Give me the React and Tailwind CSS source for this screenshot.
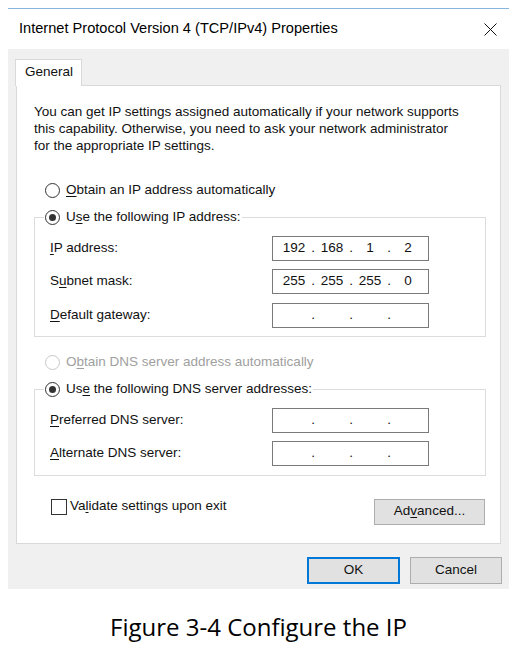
import React from 'react';

const Key = ({ children }) => (
  <span className="underline decoration-1 underline-offset-2">{children}</span>
);

const Radio = ({ checked, disabled }) => (
  <span
    className={`flex h-[15px] w-[15px] shrink-0 items-center justify-center rounded-full border bg-white ${
      disabled ? 'border-[#c8c8c8]' : 'border-[#333333]'
    }`}
  >
    {checked && <span className="h-[7px] w-[7px] rounded-full bg-[#333333]" />}
  </span>
);

const IpField = ({ parts = ['', '', '', ''] }) => (
  <div className="flex h-[25px] w-[157px] items-center border border-[#7a7a7a] bg-white pl-[3px]">
    {parts.map((p, i) => (
      <React.Fragment key={i}>
        <span className="w-[36px] text-center">{p}</span>
        {i < 3 && <span className="flex w-[2px] justify-center">.</span>}
      </React.Fragment>
    ))}
  </div>
);

const Row = ({ label, parts }) => (
  <div className="flex items-center justify-between">
    <span>{label}</span>
    <IpField parts={parts} />
  </div>
);

const Group = ({ legend, className, children }) => (
  <fieldset className={`ml-[17px] w-[452px] border border-[#dcdcdc] ${className}`}>
    <legend className="ml-[9px] px-[1px]">
      <div className="flex h-[20px] items-center gap-[6px]">
        <Radio checked />
        <span>{legend}</span>
      </div>
    </legend>
    <div className="flex flex-col gap-[8.5px] pb-[8.5px] pl-[15px] pr-[56px] pt-[8px]">{children}</div>
  </fieldset>
);

export default function App() {
  return (
    <div className="h-[658px] w-[509px] bg-white pl-[8px] pt-[8px] font-['Liberation_Sans',Arial,sans-serif] text-[13.5px] text-[#111111]">
      <div className="w-[501px]">
        {/* window frame */}
        <div className="border-t border-[#86b6de]" />
        <div className="flex h-[40px] items-center justify-between bg-white pl-[11px] pr-[12px]">
          <span className="text-[14.6px] text-black">Internet Protocol Version 4 (TCP/IPv4) Properties</span>
          <svg width="13" height="13" viewBox="0 0 13 13" className="text-[#111]">
            <path d="M0.5 0.5 L12.5 12.5 M12.5 0.5 L0.5 12.5" stroke="currentColor" strokeWidth="1" fill="none" />
          </svg>
        </div>

        <div className="flex h-[540px] flex-col bg-[#f0f0f0] pt-[10px]">
          {/* tab */}
          <div className="relative z-10 -mb-px ml-[7px] flex h-[27px] w-[67px] items-center border border-b-0 border-[#d9d9d9] bg-white pb-[1px] pl-[9px]">
            General
          </div>

          {/* panel */}
          <div className="ml-[8px] flex h-[459px] w-[485px] flex-col border border-[#d9d9d9] bg-white">
            <p className="ml-[17px] mt-[17px] leading-[17px]">
              You can get IP settings assigned automatically if your network supports
              <br />
              this capability. Otherwise, you need to ask your network administrator
              <br />
              for the appropriate IP settings.
            </p>

            <div className="ml-[28px] mt-[26.5px] flex h-[20px] items-center gap-[6px]">
              <Radio />
              <span>
                <Key>O</Key>btain an IP address automatically
              </span>
            </div>

            <Group
              className="mt-[7px]"
              legend={
                <>
                  U<Key>s</Key>e the following IP address:
                </>
              }
            >
              <Row label={<><Key>I</Key>P address:</>} parts={['192', '168', '1', '2']} />
              <Row label={<>S<Key>u</Key>bnet mask:</>} parts={['255', '255', '255', '0']} />
              <Row label={<><Key>D</Key>efault gateway:</>} />
            </Group>

            <div className="ml-[28px] mt-[15px] flex h-[20px] items-center gap-[6px] text-[#a0a0a0]">
              <Radio disabled />
              <span>
                O<Key>b</Key>tain DNS server address automatically
              </span>
            </div>

            <Group
              className="mt-[7.5px]"
              legend={
                <>
                  Us<Key>e</Key> the following DNS server addresses:
                </>
              }
            >
              <Row label={<><Key>P</Key>referred DNS server:</>} />
              <Row label={<><Key>A</Key>lternate DNS server:</>} />
            </Group>

            <div className="mt-[23px] flex items-start justify-between pl-[34px] pr-[15px]">
              <div className="flex h-[16px] items-center gap-[3px]">
                <span className="h-[16px] w-[16px] border border-[#333333] bg-white" />
                <span>
                  Va<Key>l</Key>idate settings upon exit
                </span>
              </div>
              <button className="flex h-[26px] w-[111px] items-center justify-center border border-[#adadad] bg-[#e1e1e1]">
                <span>
                  Ad<Key>v</Key>anced...
                </span>
              </button>
            </div>
          </div>

          {/* dialog buttons */}
          <div className="mt-[13px] flex justify-end gap-[10px] pr-[7px]">
            <button className="flex h-[27px] w-[93px] items-center justify-center border-2 border-[#0078d7] bg-[#e1e1e1]">
              OK
            </button>
            <button className="flex h-[27px] w-[92px] items-center justify-center border border-[#adadad] bg-[#e1e1e1]">
              Cancel
            </button>
          </div>
        </div>

        <div className="mt-[21px] text-center font-['Open_Sans',sans-serif] text-[24px] leading-[34px] text-black">
          Figure 3-4 Configure the IP
        </div>
      </div>
    </div>
  );
}
